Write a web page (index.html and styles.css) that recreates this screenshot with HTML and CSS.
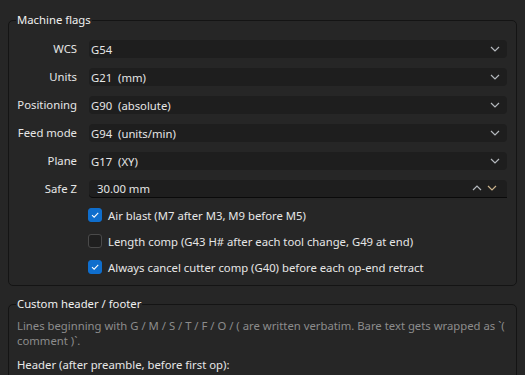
FILE: index.html
```html
<!DOCTYPE html>
<html lang="en">
  <head>
    <meta charset="UTF-8" />
    <title>Post-processor settings</title>
    <link rel="stylesheet" href="styles.css">
  </head>
  <body>
    <div class="page">
      <!-- Machine flags -->
      <fieldset class="group">
        <legend>Machine flags</legend>
        <div class="form">
          <label class="lbl">WCS</label>
          <div class="combo"><span>G54</span><svg class="chev" viewBox="0 0 10 6"><polyline points="1,1 5,5 9,1" /></svg></div>

          <label class="lbl">Units</label>
          <div class="combo"><span>G21&nbsp; (mm)</span><svg class="chev" viewBox="0 0 10 6"><polyline points="1,1 5,5 9,1" /></svg></div>

          <label class="lbl">Positioning</label>
          <div class="combo"><span>G90&nbsp; (absolute)</span><svg class="chev" viewBox="0 0 10 6"><polyline points="1,1 5,5 9,1" /></svg></div>

          <label class="lbl">Feed mode</label>
          <div class="combo"><span>G94&nbsp; (units/min)</span><svg class="chev" viewBox="0 0 10 6"><polyline points="1,1 5,5 9,1" /></svg></div>

          <label class="lbl">Plane</label>
          <div class="combo"><span>G17&nbsp; (XY)</span><svg class="chev" viewBox="0 0 10 6"><polyline points="1,1 5,5 9,1" /></svg></div>

          <label class="lbl">Safe Z</label>
          <div class="combo spin">
            <span>30.00 mm</span>
            <div class="spin-btns">
              <svg class="chev" viewBox="0 0 10 6"><polyline points="1,5 5,1 9,5" /></svg>
              <svg class="chev" viewBox="0 0 10 6"><polyline points="1,1 5,5 9,1" /></svg>
            </div>
          </div>
        </div>

        <div class="checks">
          <div class="check">
            <span class="box on"><svg viewBox="0 0 14 14"><polyline points="3.5,7.2 6,9.6 10.8,4.6" /></svg></span>
            <span>Air blast (M7 after M3, M9 before M5)</span>
          </div>
          <div class="check">
            <span class="box"></span>
            <span>Length comp (G43 H# after each tool change, G49 at end)</span>
          </div>
          <div class="check">
            <span class="box on"><svg viewBox="0 0 14 14"><polyline points="3.5,7.2 6,9.6 10.8,4.6" /></svg></span>
            <span>Always cancel cutter comp (G40) before each op-end retract</span>
          </div>
        </div>
      </fieldset>

      <!-- Custom header / footer -->
      <fieldset class="group second">
        <legend>Custom header / footer</legend>
        <p class="hint">Lines beginning with G / M / S / T / F / O / ( are written verbatim. Bare text gets wrapped as `(<br />comment )`.</p>
        <p class="sub">Header (after preamble, before first op):</p>
      </fieldset>
    </div>
  </body>
</html>
```

FILE: styles.css
```css
* {
  margin: 0;
  padding: 0;
  box-sizing: border-box;
}

html,
body {
  width: 100%;
  height: 100%;
  background: #262626;
  color: #e6e6e6;
  font-family: "Noto Sans", "Open Sans", sans-serif;
  font-size: 11.3px;
  overflow: hidden;
}

.page {
  padding: 12px 8px 0 8px;
  display: flex;
  flex-direction: column;
  gap: 10px;
  width: 525px;
}

.group {
  border: 1px solid #141414;
  border-radius: 5px;
  padding: 12px 9px 8px 8px;
  background: #262626;
}

.group legend {
  margin-left: -1px;
  padding: 0 1px;
  line-height: 16px;
  color: #f0f0f0;
}

/* label / field grid */
.form {
  display: grid;
  grid-template-columns: 60px 1fr;
  column-gap: 12px;
  row-gap: 10px;
  align-items: center;
}

.lbl {
  text-align: right;
  white-space: nowrap;
  line-height: 18px;
}

.combo {
  height: 18px;
  background: #1e1e1e;
  border-radius: 4px;
  display: flex;
  align-items: center;
  justify-content: space-between;
  padding: 0 7px 0 2px;
  white-space: pre;
}

.chev {
  width: 10px;
  height: 6px;
  fill: none;
  stroke: #b4b8bd;
  stroke-width: 1.2;
}

.spin {
  padding-left: 8px;
  padding-right: 10px;
  border-bottom: 1px solid #0a0a0a;
  border-radius: 4px 4px 0 4px;
}

.spin-btns {
  display: flex;
  gap: 5px;
  margin-top: -2px;
}

.spin-btns .chev:last-child {
  stroke: #c9b28c;
}

/* checkboxes */
.checks {
  display: flex;
  flex-direction: column;
  gap: 6px;
  padding-left: 71px;
  margin-top: 7px;
}

.check {
  display: flex;
  align-items: center;
  gap: 6px;
  height: 20px;
}

.box {
  width: 14px;
  height: 14px;
  border-radius: 3px;
  border: 1px solid #4a4a4a;
  background: #1f1f1f;
  flex: none;
}

.box.on {
  background: #0f6ecd;
  border-color: #0f6ecd;
}

.box svg {
  display: block;
  width: 12px;
  height: 12px;
  fill: none;
  stroke: #ffffff;
  stroke-width: 1.2;
}

.second {
  padding-top: 6px;
}

.hint {
  color: #8c8c8c;
  line-height: 15px;
  white-space: nowrap;
}

.sub {
  margin-top: 9px;
  line-height: 16px;
}
```
